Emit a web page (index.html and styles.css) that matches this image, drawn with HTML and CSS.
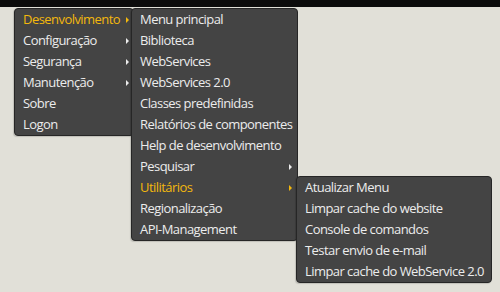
FILE: index.html
```html
<!DOCTYPE html>
<html lang="pt-BR">

<head>
    <meta charset="UTF-8">
    <meta name="viewport" content="width=device-width, initial-scale=1.0">
    <title>Menu</title>
    <link rel="stylesheet" href="styles.css">
</head>

<body>
    <div class="topbar"></div>

    <!-- Menu principal -->
    <ul class="menu main">
        <li class="sub open">Desenvolvimento
            <ul class="menu level2">
                <li>Menu principal</li>
                <li>Biblioteca</li>
                <li>WebServices</li>
                <li>WebServices 2.0</li>
                <li>Classes predefinidas</li>
                <li>Relatórios de componentes</li>
                <li>Help de desenvolvimento</li>
                <li class="sub">Pesquisar</li>
                <li class="sub open">Utilitários
                    <ul class="menu level3">
                        <li>Atualizar Menu</li>
                        <li>Limpar cache do website</li>
                        <li>Console de comandos</li>
                        <li>Testar envio de e-mail</li>
                        <li>Limpar cache do WebService 2.0</li>
                    </ul>
                </li>
                <li>Regionalização</li>
                <li>API-Management</li>
            </ul>
        </li>
        <li class="sub">Configuração</li>
        <li class="sub">Segurança</li>
        <li class="sub">Manutenção</li>
        <li>Sobre</li>
        <li>Logon</li>
    </ul>
</body>

</html>
```

FILE: styles.css
```css
body {
    margin: 0;
    background-color: #e1e0d8;
    font-family: "Open Sans", "Noto Sans", sans-serif;
    font-size: 13px;
    letter-spacing: -0.55px;
    height: 292px;
    overflow: hidden;
    position: relative;
}

.topbar {
    height: 7px;
    background-color: #0c0c0c;
}

.menu {
    list-style: none;
    margin: 0;
    padding: 0;
    position: absolute;
    background-color: #444444;
    border: 1px solid #262626;
    border-radius: 4px;
    box-shadow: -1px 1px 1px rgba(0, 0, 0, 0.15);
}

.menu li {
    position: relative;
    height: 21px;
    line-height: 20px;
    padding-left: 8px;
    color: #ececec;
    white-space: nowrap;
}

.main {
    left: 14px;
    top: 8px;
    width: 118px;
}

.level2 {
    left: 116px;
    top: -1px;
    width: 165px;
}

.level3 {
    left: 164px;
    top: -1px;
    width: 194px;
}

.menu li.open {
    color: #f3b80d;
}

.menu li.sub::after {
    content: "";
    position: absolute;
    top: 8px;
    border-left: 3px solid #ececec;
    border-top: 3px solid transparent;
    border-bottom: 3px solid transparent;
}

.main > li.sub::after {
    right: 4px;
}

.level2 > li.sub::after {
    right: 5px;
}

.menu li.open::after {
    border-left-color: #f3b80d;
}

.level2 li, .level3 li {
    color: #ececec;
}

.level2 li.open {
    color: #f3b80d;
}
```
